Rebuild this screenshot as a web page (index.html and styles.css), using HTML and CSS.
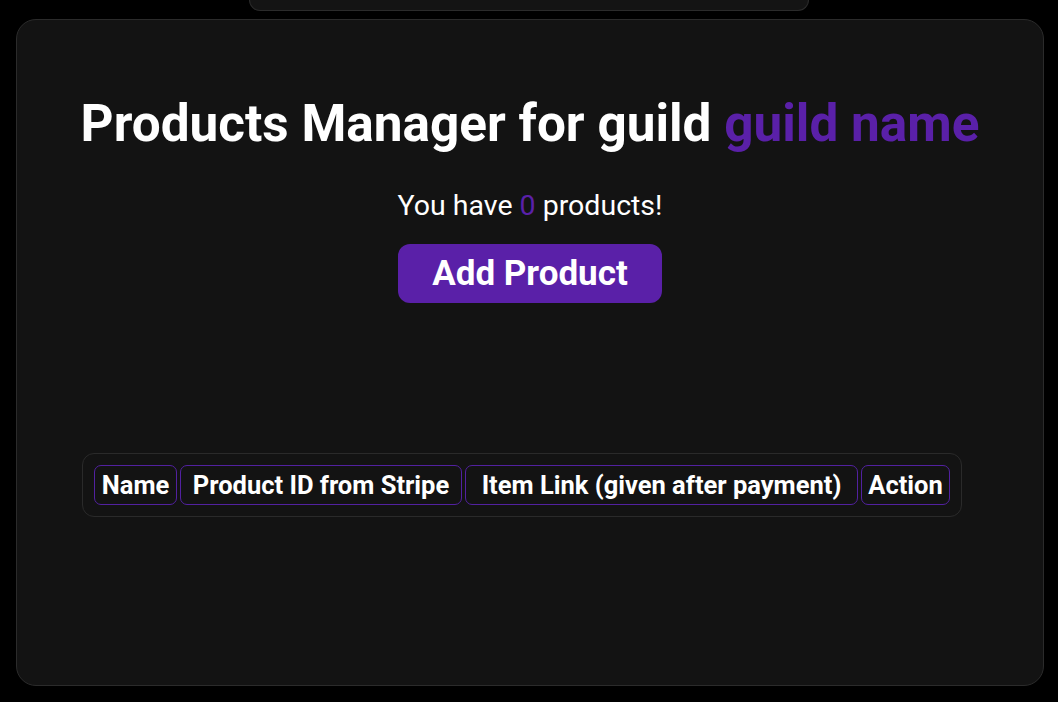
FILE: index.html
```html
<!DOCTYPE html>
<html lang="en">
<head>
<meta charset="utf-8">
<title>Products Manager</title>
<link rel="stylesheet" href="styles.css">
</head>
<body>
<div class="topbar"></div>
<main class="card">
  <h1 class="title">Products Manager for guild <span class="accent">guild name</span></h1>
  <p class="count">You have <span class="accent">0</span> products!</p>
  <button class="add-btn">Add Product</button>
  <div class="table-wrap">
    <div class="table-row">
      <div class="th th-name">Name</div>
      <div class="th th-id">Product ID from Stripe</div>
      <div class="th th-link">Item Link (given after payment)</div>
      <div class="th th-action">Action</div>
    </div>
  </div>
</main>
</body>
</html>
```
FILE: styles.css
```css
* { box-sizing: border-box; }
html, body { margin: 0; padding: 0; background: #000; }
body {
  font-family: Roboto, "Liberation Sans", sans-serif;
  color: #fff;
  width: 1058px;
  height: 702px;
  overflow: hidden;
}
.topbar {
  width: 560px;
  height: 11px;
  margin: 0 auto 0 249px;
  background: #141414;
  border: 1px solid #2b2b2b;
  border-top: none;
  border-radius: 0 0 14px 14px;
}
.card {
  margin: 8px 0 0 16px;
  width: 1028px;
  height: 667px;
  background: #131313;
  border: 1px solid #2b2b2b;
  border-radius: 20px;
  display: flex;
  flex-direction: column;
  align-items: center;
  padding-top: 74px;
}
.title {
  margin: 0;
  font-size: 51.3px;
  font-weight: 700;
  line-height: 60px;
  white-space: nowrap;
}
.accent { color: #5a20a8; }
.count {
  margin: 35px 0 0;
  font-size: 28.5px;
  line-height: 34px;
}
.add-btn {
  margin-top: 21px;
  width: 264px;
  height: 59px;
  background: #5a20a8;
  color: #fff;
  border: none;
  border-radius: 12px;
  font-family: inherit;
  font-size: 35px;
  font-weight: 700;
  padding: 0;
}
.table-wrap {
  margin: 150px 0 0 65px;
  align-self: flex-start;
  width: 880px;
  height: 64px;
  border: 1px solid #2a2a2a;
  border-radius: 12px;
  padding: 11px 11px 0;
}
.table-row {
  display: flex;
  gap: 3px;
}
.th {
  height: 40px;
  border: 1px solid #5221a0;
  border-radius: 7px;
  font-size: 25.5px;
  font-weight: 700;
  line-height: 38px;
  text-align: center;
  white-space: nowrap;
}
.th-name { width: 83px; }
.th-id { width: 282px; }
.th-link { width: 393px; }
.th-action { width: 89px; }
```
